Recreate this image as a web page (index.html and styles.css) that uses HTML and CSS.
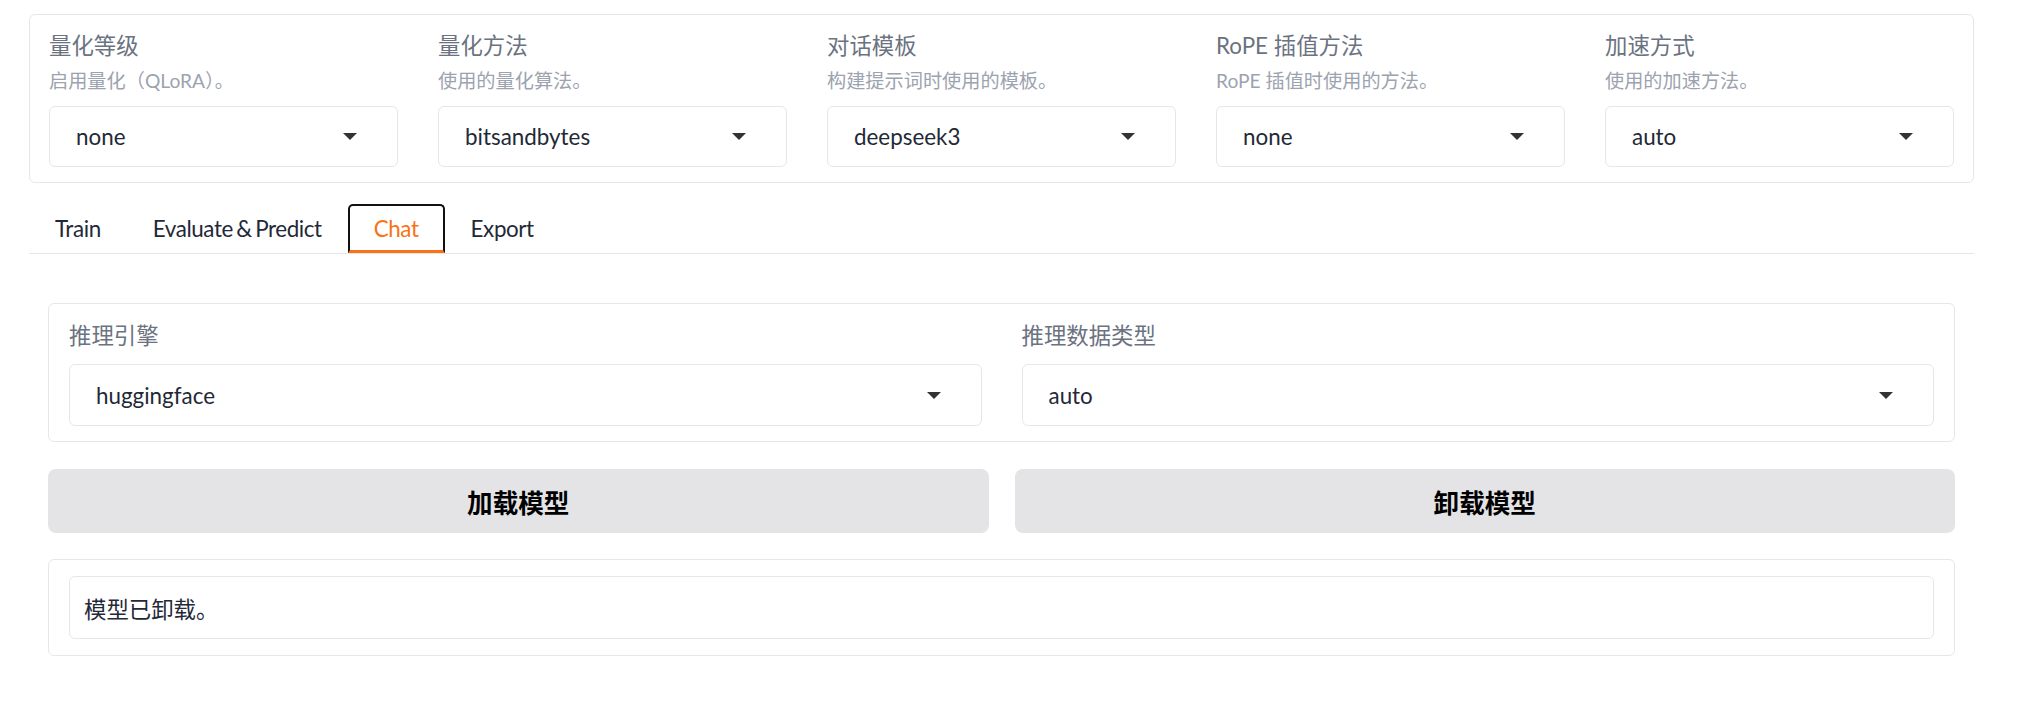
FILE: index.html
```html
<!DOCTYPE html>
<html lang="zh">
<head>
<meta charset="utf-8">
<title>Chat</title>
<link rel="stylesheet" href="styles.css">
</head>
<body>
<div class="app">
  <section class="card top-card">
    <div class="field">
      <div class="label">量化等级</div>
      <div class="info">启用量化（QLoRA）。</div>
      <div class="select"><span class="value">none</span><svg class="arrow" width="14" height="7" viewBox="0 0 14 7"><path d="M0 0H14L7 7Z"/></svg></div>
    </div>
    <div class="field">
      <div class="label">量化方法</div>
      <div class="info">使用的量化算法。</div>
      <div class="select"><span class="value">bitsandbytes</span><svg class="arrow" width="14" height="7" viewBox="0 0 14 7"><path d="M0 0H14L7 7Z"/></svg></div>
    </div>
    <div class="field">
      <div class="label">对话模板</div>
      <div class="info">构建提示词时使用的模板。</div>
      <div class="select"><span class="value">deepseek3</span><svg class="arrow" width="14" height="7" viewBox="0 0 14 7"><path d="M0 0H14L7 7Z"/></svg></div>
    </div>
    <div class="field">
      <div class="label">RoPE 插值方法</div>
      <div class="info">RoPE 插值时使用的方法。</div>
      <div class="select"><span class="value">none</span><svg class="arrow" width="14" height="7" viewBox="0 0 14 7"><path d="M0 0H14L7 7Z"/></svg></div>
    </div>
    <div class="field">
      <div class="label">加速方式</div>
      <div class="info">使用的加速方法。</div>
      <div class="select"><span class="value">auto</span><svg class="arrow" width="14" height="7" viewBox="0 0 14 7"><path d="M0 0H14L7 7Z"/></svg></div>
    </div>
  </section>

  <div class="tabs">
    <nav class="tab-nav">
      <button class="tab">Train</button>
      <button class="tab">Evaluate &amp; Predict</button>
      <button class="tab active">Chat</button>
      <button class="tab">Export</button>
    </nav>
    <div class="tab-panel">
      <section class="card engine-card">
        <div class="field">
          <div class="label">推理引擎</div>
          <div class="select"><span class="value">huggingface</span><svg class="arrow" width="14" height="7" viewBox="0 0 14 7"><path d="M0 0H14L7 7Z"/></svg></div>
        </div>
        <div class="field">
          <div class="label">推理数据类型</div>
          <div class="select"><span class="value">auto</span><svg class="arrow" width="14" height="7" viewBox="0 0 14 7"><path d="M0 0H14L7 7Z"/></svg></div>
        </div>
      </section>
      <div class="btn-row">
        <button class="btn">加载模型</button>
        <button class="btn">卸载模型</button>
      </div>
      <section class="card out-card">
        <div class="textbox">模型已卸载。</div>
      </section>
    </div>
  </div>
</div>
</body>
</html>
```

FILE: styles.css
```css
* { box-sizing: border-box; }

body {
  margin: 0;
  background: #ffffff;
  font-family: "Lato", "Noto Sans CJK SC", sans-serif;
  color: #1f2937;
}

.app {
  width: 1945px;
  margin-left: 29px;
  padding-top: 14px;
}

.card {
  border: 1px solid #e5e7eb;
  border-radius: 6px;
  background: #ffffff;
}

.top-card {
  display: grid;
  grid-template-columns: repeat(5, 1fr);
  column-gap: 40px;
  padding: 15px 19px;
}

.field {
  display: flex;
  flex-direction: column;
  min-width: 0;
}

.label {
  font-size: 22.4px;
  line-height: 32px;
  color: #6b7280;
}

.info {
  margin-top: 6px;
  font-size: 19.2px;
  line-height: 26px;
  color: #9ca3af;
}

.select {
  margin-top: 12px;
  height: 61px;
  border: 1px solid #e5e7eb;
  border-radius: 6px;
  display: flex;
  align-items: center;
  justify-content: space-between;
  padding: 0 40px 0 26px;
  font-size: 22.4px;
  color: #1f2937;
}

.arrow path { fill: #333333; }

.tabs { margin-top: 21px; }

.tab-nav {
  display: flex;
  border-bottom: 1px solid #e5e7eb;
}

.tab {
  height: 49px;
  padding: 0 26px;
  border: none;
  background: none;
  font-family: inherit;
  font-size: 22.4px;
  letter-spacing: -0.4px;
  word-spacing: -2px;
  color: #1f2937;
}

.tab.active {
  padding: 0 24px;
  color: #f97316;
  border: 2px solid #111111;
  border-bottom: 3px solid #f97316;
  border-radius: 5px 5px 0 0;
}

.tab-panel {
  padding: 49px 19px 0;
}

.engine-card {
  display: grid;
  grid-template-columns: 1fr 1fr;
  column-gap: 40px;
  padding: 16px 20px 15px;
}

.engine-card .select { height: 62px; }

.btn-row {
  margin-top: 27px;
  display: grid;
  grid-template-columns: 1fr 1fr;
  column-gap: 26px;
}

.btn {
  height: 64px;
  border: none;
  border-radius: 8px;
  background: #e4e4e7;
  font-family: inherit;
  font-size: 25.6px;
  font-weight: 700;
  color: #000000;
}

.out-card {
  margin-top: 26px;
  padding: 16px 20px;
}

.textbox {
  height: 63px;
  border: 1px solid #e5e7eb;
  border-radius: 6px;
  display: flex;
  align-items: center;
  padding: 0 14px;
  font-size: 22.4px;
  color: #1f2937;
}
```
